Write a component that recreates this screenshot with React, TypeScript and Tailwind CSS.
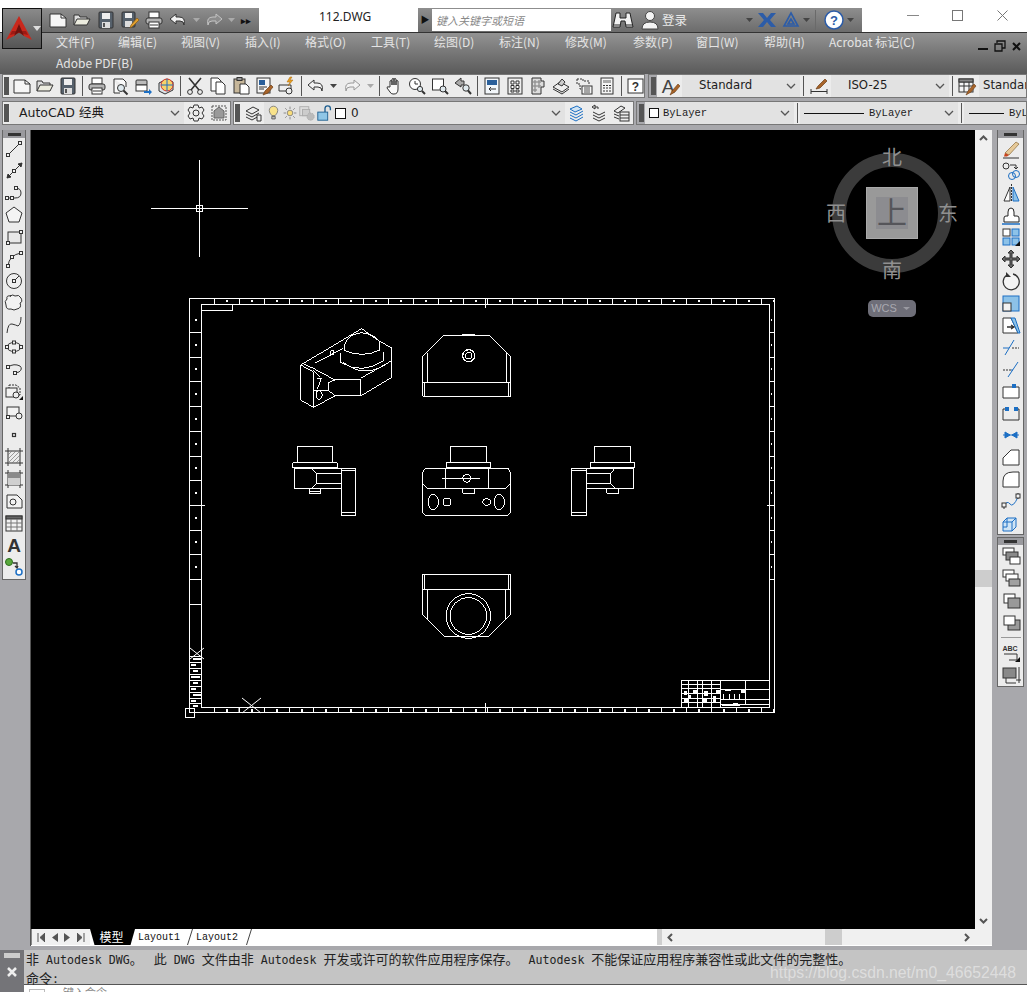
import React from "react";

const BL = "#1c6fc4";
const sq = (x: number, y: number, s = 3) => <rect x={x - s / 2} y={y - s / 2} width={s} height={s} fill="#f2f2f2" />;

const I: Record<string, React.ReactNode> = {
  new: <><path d="M2 4h11l5 4v9H2z" fill="#f6f6f6" /><path d="M13 4v4h5" /></>,
  open: <><path d="M2 15V5h5l1 2h7v2" fill="#ddd" /><path d="M2 15l3-6h13l-3 6z" fill="#ececdf" /></>,
  save: <><rect x="3" y="2" width="14" height="16" rx="1" fill="#56616c" /><rect x="6" y="3" width="8" height="6" fill="#eee" stroke="none" /><rect x="6" y="12" width="8" height="6" fill="#ddd" stroke="none" /><rect x="7" y="13" width="2" height="4" fill="#555" stroke="none" /></>,
  saveas: <><rect x="2" y="2" width="13" height="15" rx="1" fill="#56616c" /><rect x="5" y="3" width="7" height="5" fill="#eee" stroke="none" /><rect x="5" y="11" width="7" height="6" fill="#ddd" stroke="none" /><path d="M10 18l1-3 6-7 2 2-6 6z" fill="#e0a030" stroke="#8a5a10" strokeWidth="0.7" /></>,
  print: <><rect x="5" y="2" width="10" height="6" fill="#fff" /><rect x="2" y="8" width="16" height="6" rx="2" fill="#b5b5b5" /><rect x="5" y="12" width="10" height="6" fill="#fff" /><path d="M6 15h8" /></>,
  preview: <><path d="M4 3h9l3 3v5M4 3v14h6" fill="#fafafa" /><circle cx="11" cy="12" r="3.5" fill="#dfe9ee" /><path d="M13.5 14.5l4 4" strokeWidth="2" /></>,
  publish: <><rect x="3" y="4" width="11" height="5" rx="1" fill="#bbb" /><rect x="3" y="9" width="11" height="6" fill="#fff" /><path d="M11 15h5v-2l3 3-3 3v-2h-5z" fill={BL} stroke="none" /></>,
  d3: <><path d="M3 7l8-4 6 3v8l-8 4-6-3z" fill="#dbe4ea" /><circle cx="11" cy="9" r="6" fill="#f6d36a" stroke="#d0332a" /><path d="M11 3v12M5 9h12" stroke={BL} /></>,
  cut: <><path d="M4 2l10 12M16 2L6 14" strokeWidth="1.6" /><circle cx="5" cy="16" r="2.4" /><circle cx="15" cy="16" r="2.4" /></>,
  copy: <><path d="M3 2h7l3 3v10H3z" fill="#fff" /><path d="M8 6h6l3 3v9H8z" fill="#fff" /></>,
  paste: <><rect x="3" y="3" width="11" height="14" fill="#c7b79a" /><rect x="6" y="1.5" width="5" height="3" fill="#999" /><path d="M9 8h6l3 3v7H9z" fill="#fff" /></>,
  match: <><rect x="3" y="2" width="13" height="15" fill="#f5f5f5" /><rect x="5" y="4" width="6" height="5" fill="#2a5f9a" stroke="none" /><path d="M5 11h8M5 13h5" /><path d="M9 19l2-4 6-6 2 2-5 6z" fill="#a8642a" stroke="#6b3c14" strokeWidth="0.7" /></>,
  block: <><path d="M2 9h12v6H2z" fill="#eee" /><circle cx="12" cy="15" r="3" fill="#eee" /><path d="M13 1l-3 5h3l-2 4 5-6h-3l2-3z" fill="#e8a020" stroke="#a86a10" strokeWidth="0.5" /></>,
  undo: <path d="M8 4L2 9l6 5v-3h4q4 0 4 4 2-8-5-8H8z" fill="#f2f2f2" />,
  redo: <path d="M12 4l6 5-6 5v-3H8q-4 0-4 4-2-8 5-8h3z" fill="#f2f2f2" stroke="#999" />,
  qredo: <path d="M12 4l6 5-6 5v-3H8q-4 0-4 4-2-8 5-8h3z" fill="#8c8c8c" stroke="#c4c4c4" />,
  pan: <path d="M6 11V5q1-1 2 0v4V3q1-1 2 0v6V3q1-1 2 0v6V5q1-1 2 0v8q0 5-4 5H9q-2 0-3-2l-3-4q0-2 2-1z" fill="#fafafa" />,
  zr: <><circle cx="8" cy="8" r="5.5" fill="#fff" /><path d="M8 5v3h3" /><circle cx="13" cy="13" r="2.6" fill="#dfe9ee" /><path d="M15 15l3 3" strokeWidth="2" /></>,
  zw: <><rect x="2.5" y="3" width="11" height="11" fill="#fff" /><circle cx="13" cy="13" r="3" fill="#dfe9ee" /><path d="M15 15l3 3" strokeWidth="2" /></>,
  zp: <><path d="M8 2L2 7l6 4V9h3V5H8z" fill="#aaa" /><circle cx="13" cy="12" r="3.2" fill="#dfe9ee" /><path d="M15 14.5l3 3.5" strokeWidth="2" /></>,
  props: <><rect x="3" y="2" width="14" height="16" fill="#f2f6fa" /><rect x="5" y="4" width="10" height="5" fill="#2a5f9a" stroke="none" /><path d="M7 13h7M7 13l2-2M7 13l2 2" /></>,
  dc: <><rect x="3" y="2" width="14" height="16" fill="#eee" /><path d="M6 5h3v3H6zM11 5h3v3h-3zM6 9.500h3v3H6zM11 9.500h3v3h-3zM6 14h3v2H6zM11 14h3v2h-3z" fill="#fff" /></>,
  pal: <><path d="M4 2h9v3h3v6h-3v7H4z" fill="#ddd" /><path d="M6 5h2v2H6zM10 5h2v2h-2zM6 9h2v2H6zM10 9h2v2h-2zM6 13h2v2H6z" fill="#fff" stroke="#777" /></>,
  sheet: <><path d="M2 11l7-5 9 5-7 5z" fill="#eee" /><path d="M2 13l9 5 7-5" /><path d="M7 8l4-5 3 3-3 4z" fill="#ccc" /></>,
  markup: <><path d="M3 3h6v2h6v4M3 3v5h3v5h3" strokeDasharray="2 1" /><rect x="8" y="10" width="10" height="8" fill="#f5f5f5" /><path d="M10 12h6M10 14h6M10 16h6" stroke="#555" /></>,
  calc: <><rect x="4" y="2" width="12" height="16" fill="#f5f5f5" /><rect x="6" y="4" width="8" height="3" fill="#aaa" stroke="none" /><path d="M6 9.500h2M9 9.500h2M12 9.500h2M6 12h2M9 12h2M12 12h2M6 15h2M9 15h2M12 15h2" /></>,
  help: <><rect x="2" y="3" width="15" height="14" fill="#fff" /><text x="9.500" y="15" fontSize="12" fontWeight="700" textAnchor="middle" fill="#333" stroke="none" fontFamily="Liberation Sans">?</text></>,
  a: <><text x="8" y="17" fontSize="19" textAnchor="middle" fill="#444" stroke="none" fontFamily="Liberation Sans">A</text><path d="M10 19l2-4 6-7 2 2-5 6z" fill="#a8642a" stroke="#6b3c14" strokeWidth="0.6" /></>,
  dim: <><path d="M2 13v5M18 13v5M2 15.500h16" /><path d="M7 13l2-3 7-7 2 2-7 7z" fill="#a8642a" stroke="#6b3c14" strokeWidth="0.7" /></>,
  table: <><rect x="2" y="3" width="14" height="13" fill="#f5f5f5" /><path d="M2 6h14M2 10h14M7 6v10M12 6v10" /><rect x="2" y="3" width="14" height="3" fill="#888" /><path d="M9 19l2-4 6-7 2 2-5 6z" fill="#a8642a" stroke="#6b3c14" strokeWidth="0.6" /></>,
  gear: <><circle cx="10" cy="10" r="3" /><path d="M8 2h4l1 3 3-1 2 3-2 3 2 3-2 3-3-1-1 3H8l-1-3-3 1-2-3 2-3-2-3 2-3 3 1z" /></>,
  wsp: <><path d="M3 3h14v14H3z" strokeDasharray="2 1" stroke="#555" /><path d="M5 15V8l5-4 5 4v7z" fill="#9a9a9a" stroke="#666" /></>,
  lay: <><path d="M3 8l7-4 6 3-7 4z" fill="#eee" /><path d="M3 11l6 3 7-4M3 14l6 3 7-4" /><path d="M14 12h4v6h-4z" fill="#eee" /></>,
  bulb: <><path d="M5 7a5 5 0 1 1 10 0q0 3-3 6H8q-3-3-3-6z" fill="#f8e28a" stroke="#777" /><path d="M8 14h4v3H8z" fill="#bbb" stroke="#555" /></>,
  sun: <><circle cx="10" cy="10" r="3.5" fill="#f8dc7a" stroke="#777" /><path d="M10 2v3M10 15v3M2 10h3M15 10h3M4 4l2 2M14 14l2 2M16 4l-2 2M6 14l-2 2" stroke="#777" /></>,
  frz: <><rect x="2" y="3" width="10" height="10" fill="#ddd" stroke="#aaa" /><rect x="5" y="6" width="8" height="7" fill="#ccc" stroke="#aaa" /><circle cx="14" cy="14" r="4" fill="#bbb" stroke="#aaa" strokeDasharray="1.500 1" /></>,
  lock: <><rect x="2" y="9" width="11" height="9" fill="#8fc6e6" stroke="#1d5e90" /><path d="M10 9V5q0-3 3-3t3 3v2" stroke="#1d5e90" strokeWidth="1.500" /></>,
  mk: <><path d="M3 6l7-3 5 3-7 3z" fill="#cfe3f3" stroke={BL} /><path d="M3 9l6 3 7-4M3 12l6 3 7-4M3 15l6 3 7-4" stroke={BL} /></>,
  prev: <><path d="M4 4l3-2v4zM7 4h3v2" /><path d="M5 9l6 3 6-3M5 12l6 3 6-3M5 15l6 3 6-3" /></>,
  st: <><path d="M3 8l7-5 4 2-7 5zM3 11l5 2M3 14l5 2" /><rect x="9" y="9" width="9" height="9" fill="#eee" /><path d="M9 12h9M9 15h9" /></>,
  line: <><path d="M4 16L16 4" />{sq(4, 16)}{sq(16, 4)}</>,
  xline: <><path d="M3 17L18 2M10 10" /><path d="M3 17l4-1-3-3zM18 2l-4 1 3 3z" fill="#333" />{sq(10, 10)}</>,
  pline: <><path d="M3 15h8q6 0 6-5t-6-5" />{sq(3, 15)}{sq(8, 15)}{sq(12, 5)}</>,
  poly: <path d="M10 2l8 6-3 9H5L2 8z" fill="#f4f4f4" />,
  rect: <><rect x="4" y="5" width="13" height="11" fill="#e8e8e8" />{sq(4, 16)}{sq(17, 5)}</>,
  arc: <><path d="M4 17Q5 6 17 4" />{sq(4, 17)}{sq(8, 8)}{sq(17, 4)}</>,
  circ: <><circle cx="10" cy="10" r="7.500" fill="#efefef" /><path d="M10 10l5-5" />{sq(10, 10)}</>,
  cloud: <path d="M6 3q3-2 5 0 4-2 6 2 2 4-1 5 2 5-3 6-3 2-6 0-5 1-5-4-2-4 1-6-1-4 4-3z" fill="#f2f2f2" />,
  spl: <path d="M3 18Q4 8 8 9t6 2q3-2 3-9" />,
  ell: <><ellipse cx="10" cy="10" rx="7" ry="4.500" fill="#efefef" />{sq(3, 10)}{sq(17, 10)}{sq(10, 5.500)}{sq(10, 14.500)}</>,
  earc: <><path d="M4 8q6-4 12-1 3 3-1 6l-4 1" />{sq(4, 8)}{sq(11, 14)}</>,
  ins: <><path d="M5 4h7l4 3v7H5z" strokeDasharray="2 1" /><rect x="2" y="7" width="11" height="9" fill="#f2f2f2" /><circle cx="12" cy="14" r="3" fill="#eee" /><path d="M19 15v4h-4z" fill="#111" stroke="none" /></>,
  blk: <><rect x="3" y="4" width="12" height="9" fill="#f2f2f2" /><circle cx="15" cy="13" r="3" fill="#eee" />{sq(4, 14)}</>,
  pt: <rect x="8.500" y="8.500" width="3" height="3" strokeWidth="1.200" />,
  hatch: <><path d="M1 4h18M1 16h18M4 1v18M16 1v18" /><path d="M4 8l4-4M4 12l8-8M4 16L16 4M8 16l8-8M12 16l4-4" stroke="#777" strokeWidth="0.700" /></>,
  grad: <><path d="M1 4h18M1 16h18M4 1v18M16 1v18" /><rect x="4" y="4" width="12" height="12" fill="#8a8a8a" stroke="none" /><rect x="4" y="9" width="12" height="7" fill="#cfcfcf" stroke="none" /></>,
  region: <><path d="M3 4h10l5 5v8H3z" fill="#f2f2f2" /><circle cx="9" cy="11" r="3" /></>,
  tbl: <><rect x="2" y="3" width="16" height="15" fill="#f2f2f2" /><rect x="2" y="3" width="16" height="3" fill="#666" /><path d="M2 10h16M2 14h16M7 6v12M13 6v12" stroke="#777" /></>,
  txt: <text x="10" y="17" fontSize="19" textAnchor="middle" fill="#333" stroke="none" fontFamily="Liberation Sans" fontWeight="700">A</text>,
  addsel: <><circle cx="5" cy="5" r="3.500" fill="#58a83c" stroke="#2d6e1c" /><circle cx="15" cy="15" r="3" fill="#fff" stroke={BL} strokeWidth="1.500" /><path d="M9 6h4v4M11 9l2 2 1-2" strokeWidth="1.300" /></>,
  erase: <><path d="M4 14L15 3l3 2L8 16z" fill="#e6c998" stroke="#8a6a3a" strokeWidth="0.700" /><path d="M4 14l4 2-2 1.500H3z" fill="#c8431a" stroke="none" /><path d="M2 19h16" /></>,
  rcopy: <><circle cx="5" cy="5" r="3" /><path d="M9 4h6v4M13 6l2 2 2-2" /><circle cx="11" cy="15" r="3.500" stroke={BL} /><circle cx="15" cy="13" r="3.500" stroke={BL} /></>,
  mir: <><path d="M9 4v14H3z" fill="#fff" /><path d="M12 4v14h6z" fill="#8dc2e8" stroke={BL} /><path d="M10.500 1v18" strokeDasharray="2 1" /></>,
  off: <><path d="M3 17v-4q0-2 2-2h2V7q0-4 3-4t3 4v4h3q2 0 2 2v4z" fill="#fff" stroke="#222" /><path d="M1 19h18" stroke={BL} strokeWidth="1.500" /></>,
  arr: <><rect x="2" y="2" width="7" height="7" fill="#fff" /><rect x="11" y="2" width="7" height="7" fill="#8dc2e8" stroke={BL} /><rect x="2" y="11" width="7" height="7" fill="#8dc2e8" stroke={BL} /><rect x="11" y="11" width="7" height="7" fill="#8dc2e8" stroke={BL} /><path d="M19 14v5h-5z" fill="#111" stroke="none" /></>,
  mov: <path d="M10 1l3 3h-2v5h5V7l3 3-3 3v-2h-5v5h2l-3 3-3-3h2v-5H4v2l-3-3 3-3v2h5V4H7z" fill="#666" />,
  rot: <><path d="M6 4a8 8 0 1 0 6-1" strokeWidth="1.300" fill="#f4f4f4" /><path d="M5 1v5h5z" fill="#333" stroke="none" /></>,
  sca: <><rect x="2" y="3" width="16" height="15" fill="#8dc2e8" stroke={BL} /><rect x="2" y="10" width="8" height="8" fill="#f2f2f2" stroke="#333" /></>,
  str: <><path d="M2 3h8l7 15H2z" fill="#fff" /><path d="M10 3h4l5 15h-2z" fill="#8dc2e8" stroke={BL} /><path d="M6 12h7M10 10l3 2-3 2" strokeWidth="1.300" /></>,
  trim: <><path d="M4 18L13 3" stroke={BL} /><path d="M2 11h6" stroke={BL} /><path d="M11 11h7" stroke="#333" strokeDasharray="2 1" /></>,
  ext: <><path d="M7 18L17 3" stroke={BL} /><path d="M2 11h8" stroke="#333" strokeDasharray="2 1" /><path d="M10 11h2" stroke={BL} /></>,
  brp: <><path d="M2 6h16M2 6v11h16V6" fill="#fff" /><rect x="11" y="3" width="4" height="4" fill={BL} stroke="none" /></>,
  brk: <><path d="M2 6v11h16V6" /><path d="M2 6h2M17 6h1" /><rect x="4" y="4" width="4" height="4" fill={BL} stroke="none" /><rect x="13" y="4" width="4" height="4" fill={BL} stroke="none" /></>,
  join: <><path d="M2 10h16" stroke={BL} /><path d="M4 7l5 3-5 3zM16 7l-5 3 5 3z" fill={BL} stroke={BL} /></>,
  cham: <path d="M2 18v-7l8-8h8v15z" fill="#fff" stroke="#333" />,
  fil: <path d="M2 18v-6Q2 3 12 3h6v15z" fill="#fff" stroke="#333" />,
  blend: <><path d="M3 15q3-6 6-2t8-7" stroke={BL} /><path d="M3 18v-6M17 8V2" />{sq(3, 14, 4)}{sq(17, 5, 4)}</>,
  expl: <><path d="M2 9l4-4h9v9l-4 4H2z" fill="#cfe4f5" stroke={BL} /><path d="M2 9h9v9M11 9l4-4M6 5v9H2" stroke={BL} /></>,
  ord1: <><rect x="2" y="2" width="11" height="7" fill="#fff" /><rect x="5" y="6" width="12" height="8" fill="#8a8a8a" /><rect x="9" y="11" width="10" height="7" fill="#fff" /></>,
  ord2: <><rect x="2" y="2" width="11" height="7" fill="#fff" /><rect x="5" y="6" width="12" height="7" fill="#fff" /><rect x="8" y="11" width="11" height="7" fill="#a0a0a0" /></>,
  ord3: <><rect x="3" y="4" width="11" height="9" fill="#fff" /><rect x="7" y="8" width="12" height="10" fill="#999" /></>,
  ord4: <><rect x="7" y="8" width="12" height="10" fill="#999" /><rect x="3" y="4" width="11" height="9" fill="#fff" /></>,
  abc: <><text x="9" y="8" fontSize="7" fontWeight="700" textAnchor="middle" fill="#333" stroke="none" fontFamily="Liberation Sans">ABC</text><path d="M3 11h13v6H8" /><path d="M19 14v5h-5z" fill="#111" stroke="none" /></>,
  hat: <><rect x="2" y="3" width="13" height="10" fill="#888" /><path d="M5 13v5h10M18 2v16M15 15h6" /></>,
};

function Ic({ n, w = 23 }: { n: string; w?: number }) {
  return (
    <span className="flex h-[20px] shrink-0 items-center justify-center" style={{ width: w }}>
      <svg width="20" height="20" viewBox="0 0 20 20" fill="none" stroke="#333" strokeWidth="1">
        {I[n]}
      </svg>
    </span>
  );
}
const Sep = () => (
  <span className="flex h-[20px] w-[6px] shrink-0 justify-center">
    <span className="h-full w-[1px] bg-[#555]" />
  </span>
);
const Drop = ({ pale }: { pale?: boolean }) => (
  <span className="flex h-[20px] w-[12px] shrink-0 items-center justify-center">
    <svg width="7" height="4" viewBox="0 0 7 4"><path d="M0 0h7L3.500 4z" fill={pale ? "#aaa" : "#444"} /></svg>
  </span>
);
const Grip = ({ cls = "" }: { cls?: string }) => (
  <span className={`h-[18px] w-[5px] shrink-0 bg-[radial-gradient(#555_1px,transparent_1px)] bg-[length:2px_2px] ${cls}`} />
);
const Chev = () => (
  <svg className="shrink-0" width="10" height="6" viewBox="0 0 10 6" fill="none" stroke="#555" strokeWidth="1.300"><path d="M1 1l4 4 4-4" /></svg>
);
function Combo({ w, children, cls = "" }: { w: number; children: React.ReactNode; cls?: string }) {
  return (
    <div className={`flex h-[22px] shrink-0 items-center justify-between bg-[#e2e2e2] pr-[4px] text-[#1c1c1c] ${cls}`} style={{ width: w }}>
      <div className="flex min-w-0 flex-1 items-center overflow-hidden whitespace-nowrap">{children}</div>
      <Chev />
    </div>
  );
}

const MENU: [string, number][] = [["文件(F)", 62], ["编辑(E)", 63], ["视图(V)", 64], ["插入(I)", 60], ["格式(O)", 66], ["工具(T)", 63], ["绘图(D)", 65], ["标注(N)", 66], ["修改(M)", 68], ["参数(P)", 63], ["窗口(W)", 68], ["帮助(H)", 65], ["Acrobat 标记(C)", 100], ["Adobe PDF(B)", 100]];
const LEFT = ["line", "xline", "pline", "poly", "rect", "arc", "circ", "cloud", "spl", "ell", "earc", "ins", "blk", "pt", "hatch", "grad", "region", "tbl", "txt", "addsel"];
const RIGHT = ["erase", "rcopy", "mir", "off", "arr", "mov", "rot", "sca", "str", "trim", "ext", "brp", "brk", "join", "cham", "fil", "blend", "expl"];

const SANS = "font-['Noto_Sans_CJK_SC','Noto_Sans',sans-serif]";
const DJ = "font-['DejaVu_Sans','Noto_Sans_CJK_SC',sans-serif]";
const MONO = "font-['Liberation_Mono','Noto_Sans_CJK_SC',monospace]";

function Mixed({ text }: { text: string }) {
  return (
    <>
      {text.split(/([\u3000-\u9fff]+)/).map((p, i) =>
        /[\u3000-\u9fff]/.test(p) ? (
          <span key={i} className="text-[13px] font-['Noto_Sans_CJK_SC',sans-serif]">{p}</span>
        ) : (
          <span key={i} className="whitespace-pre font-['DejaVu_Sans_Mono',monospace] text-[11.600px]">{p}</span>
        ),
      )}
    </>
  );
}

const Slash = () => (
  <svg className="shrink-0" width="6" height="16" viewBox="0 0 6 16" fill="none" stroke="#444"><path d="M5.500 0L.5 16" /></svg>
);

function Drawing() {
  const xs = Array.from({ length: 23 }, (_, i) => 214 + i * 24.85);
  const ys = Array.from({ length: 15 }, (_, i) => 579 - i * 24.7).filter((y) => y - 13 > 305);
  const noise = [656, 662, 668, 674, 680, 686, 692, 698, 703];
  return (
    <svg className="absolute inset-0" width="944" height="799" viewBox="31 130 944 799" fill="none" stroke="#fff" strokeWidth="1" shapeRendering="crispEdges">
      {/* crosshair */}
      <path d="M151 208.500H248M199.500 160V257" />
      <rect x="196.500" y="205.500" width="6" height="6" />
      {/* frame */}
      <rect x="189.500" y="298.500" width="585" height="414" />
      <rect x="201.500" y="304.500" width="568" height="403" />
      <path d="M202 310.500H232V304" />
      <rect x="185.500" y="708.500" width="9" height="9" />
      <path d="M239 707.500v5M242 698l19 15M261 698l-19 15M190 648l14 11M204 648l-14 11" shapeRendering="auto" />
      <path d="M485.500 703V713M485.500 298V308M190 505.500H205M767 505.500H775" />
      {xs.map((x) => (
        <g key={x}>
          <path d={`M${Math.round(x) + 0.5} 707V712M${Math.round(x) + 0.5} 299V304`} />
          <rect x={Math.round(x) + 12} y="709" width="2" height="3" fill="#fff" stroke="none" />
          <rect x={Math.round(x) + 12} y="300" width="2" height="2" fill="#fff" stroke="none" />
        </g>
      ))}
      {ys.map((y) => (
        <g key={y}>
          <path d={`M190 ${Math.round(y) + 0.5}H201M769 ${Math.round(y) + 0.5}H774`} />
          <rect x="195" y={Math.round(y) - 13} width="2" height="2" fill="#fff" stroke="none" />
          <rect x="771" y={Math.round(y) - 13} width="1" height="2" fill="#fff" stroke="none" />
        </g>
      ))}
      <path d="M190 604.500H201" />
      {/* dense corner on left */}
      {noise.map((y, i) => (
        <g key={y}>
          <path d={`M190 ${y + 0.5}H201`} />
          <rect x={i % 2 ? 191 : 193} y={y + 2} width={i % 3 === 0 ? 9 : 5} height="2" fill="#fff" stroke="none" />
        </g>
      ))}
      {/* views traced from the drawing */}
      <g transform="translate(280 320) scale(.33333)" strokeWidth="3" shapeRendering="crispEdges">
        <path d="M62 135L205 50L245 26L300 65L335 83V172L242 228H165L100 262L62 240ZM62 135L100 155V262M66 130L100 145L165 180H242V228M242 175L335 122M147 187V212L165 228M147 187L165 180M100 212L147 212M100 150L120 170" />
        <path d="M195 72V92Q247 115 300 90V68M195 72Q200 45 245 38Q290 45 300 68M183 100V128Q247 165 312 122V95M188 125Q247 175 316 135M104 130L190 85" />
        <path d="M110 175H124L112 208M108 222Q108 212 116 212Q128 214 126 230Q122 240 114 238Q106 234 108 222ZM152 92H162V104H152Z" />
        <path d="M428 110L492 46H627L692 110V229H428ZM428 187H692M435 187V229M685 187V229M443 187V98M680 187V98M545 44H585" />
        <circle cx="566" cy="107" r="18" strokeWidth="4" />
        <circle cx="566" cy="107" r="10" />
        <path d="M52 429V379H158V429M38 429H172V443H38ZM43 443V506H184M43 445H227V586H184V445M184 453H227M184 578H227M95 445L110 460H184M95 506L110 490H184M110 460V490M88 506V520H122V506M88 515H122" />
        <path d="M511 429V379H620V429M499 429H632V443H499ZM428 458L436 445H684L692 458V578L684 586H436L428 578ZM428 492L443 506H677L692 490M497 445V506M625 445V506M487 475H600M548 506V520H584V506" />
        <circle cx="560" cy="475" r="12" />
        <ellipse cx="460" cy="546" rx="15" ry="23" />
        <rect x="490" y="535" width="22" height="21" rx="5" />
        <ellipse cx="620" cy="546" rx="12" ry="10" />
        <ellipse cx="658" cy="546" rx="15" ry="23" />
        <path d="M943 429V379H1052V429M931 429H1064V443H931ZM1061 443V506H920M1061 445H874V586H920V445M874 453H920M874 578H920M1005 445L992 460H920M1005 506L992 490H920M992 460V490M980 506V520H1016V506" />
      </g>
      <g transform="translate(180 560) scale(.33333)" strokeWidth="3">
        <path d="M727 45H992V89H727ZM734 45V89M985 45V89M727 89V163L793 229H927L992 163V89M742 89V178M978 89V178" />
        <circle cx="865" cy="168" r="67" />
        <circle cx="865" cy="168" r="55" />
      </g>
      {/* title block */}
      <g transform="translate(660 670) scale(.33333)" strokeWidth="3">
        <path d="M64 31H328V112H64ZM182 31V112M64 44H182M64 57H182M64 72H182M64 85H182M64 98H182M85 31V112M113 31V112M128 31V112M155 31V112M182 58H328M182 88H328M182 103H328M256 31V103" />
        <path d="M192 72V88M208 72V88M224 72V88M240 72V88" />
      </g>
      <g fill="#fff" stroke="none">
        <rect x="684" y="691" width="3" height="4" /><rect x="693" y="690" width="5" height="3" /><rect x="704" y="691" width="4" height="5" /><rect x="713" y="696" width="3" height="7" /><rect x="725" y="689" width="6" height="2" /><rect x="684" y="699" width="4" height="3" /><rect x="741" y="690" width="4" height="3" /><rect x="722" y="705" width="18" height="1" />
        <rect x="703" y="698" width="4" height="5" /><rect x="716" y="690" width="4" height="3" /><rect x="688" y="695" width="3" height="3" /><rect x="733" y="703" width="5" height="3" />
      </g>
      {/* view compass */}
      <g shapeRendering="auto" stroke="none">
        <circle cx="892" cy="213" r="53" stroke="#3b3b3b" strokeWidth="14" />
        <rect x="866.500" y="187.500" width="51" height="51" fill="#999" stroke="#aaa" />
        <rect x="876" y="197" width="32" height="32" fill="#8c8c90" />
        <text x="892" y="223" fontSize="30" textAnchor="middle" fill="#55555a" fontFamily="Noto Sans CJK SC">上</text>
        <g fill="#909090" fontSize="20" textAnchor="middle" fontFamily="Noto Sans CJK SC">
          <text x="892" y="165">北</text>
          <text x="892" y="278">南</text>
          <text x="836" y="221">西</text>
          <text x="948" y="221">东</text>
        </g>
        <rect x="868" y="300" width="48" height="17" rx="5" fill="#6e6e78" />
        <text x="884" y="312" fontSize="11" textAnchor="middle" fill="#a9a9b0" fontFamily="Liberation Sans">WCS</text>
        <path d="M903 307h7l-3.500 3z" fill="#9a9aa2" />
      </g>
    </svg>
  );
}

export default function App() {
  return (
    <div className={`relative flex h-[992px] w-[1027px] flex-col overflow-hidden bg-[#a8a8ac] ${SANS}`}>
      {/* Application button */}
      <div className="absolute left-[2px] top-[8px] z-10 flex h-[41px] w-[40px] items-center border border-[#111] bg-gradient-to-b from-[#8a8a8a] to-[#555]">
        <svg className="ml-[3px]" width="26" height="25" viewBox="0 0 26 25">
          <path d="M13 0L0 24l8-4 5-4 5 4 8 4z" fill="#c9281c" />
          <path d="M6 15h14l2 4-9-2-9 2z" fill="#9c1a14" />
          <path d="M13 8L8 20l5-4 5 4z" fill="#6e120e" />
        </svg>
        <svg className="ml-[1px]" width="8" height="5" viewBox="0 0 8 5"><path d="M0 0h8L4 5z" fill="#ddd" /></svg>
      </div>

      {/* Title row */}
      <div className="flex h-[32px] shrink-0 bg-white pt-[8px]">
        <div className="w-[42px] shrink-0" />
        <div className="flex w-[217px] shrink-0 items-center bg-gradient-to-b from-[#8e8e8e] to-[#6c6c6c] pl-[4px]">
          <Ic n="new" w={24} /><Ic n="open" w={24} /><Ic n="save" w={24} /><Ic n="saveas" w={24} /><Ic n="print" w={24} /><Ic n="undo" w={24} /><Drop pale /><Ic n="qredo" /><Drop pale />
          <span className="ml-[4px] text-[9px] font-bold leading-none text-[#111]">▸▸</span>
        </div>
        <div className="flex w-[159px] shrink-0 items-start justify-start pl-[60px] text-[12px] text-[#222] font-['Noto_Sans',sans-serif]">112.DWG</div>
        <div className="flex w-[444px] shrink-0 items-center bg-gradient-to-b from-[#8e8e8e] to-[#6c6c6c]">
          <span className="flex w-[14px] justify-center text-[9px] text-[#111]">▶</span>
          <div className="flex h-[22px] w-[179px] items-center bg-white pl-[4px] text-[11px] italic text-[#888]">键入关键字或短语</div>
          <svg className="ml-[1px] mr-[2px]" width="22" height="20" viewBox="0 0 22 20" fill="#f2f2f2" stroke="#222" strokeWidth="1"><path d="M4 3h4v5h6V3h4l1 5 2 9h-7l-1-6H9l-1 6H1l2-9z" /><path d="M2 15h6M14 15h6" /></svg>
          <svg className="ml-[3px]" width="22" height="22" viewBox="0 0 22 22" fill="#f4f4f4" stroke="#444"><circle cx="11" cy="7" r="4.500" /><path d="M3 20q0-7 8-7t8 7z" /></svg>
          <span className="ml-[1px] w-[81px] text-[12.500px] leading-none text-[#e9e9e9]">登录</span>
          <Drop />
          <svg className="ml-[2px]" width="20" height="16" viewBox="0 0 20 16" fill="#2c5ca8"><path d="M1 1h5l4 5 4-5h5l-6 7 6 7h-5l-4-5-4 5H1l6-7z" /></svg>
          <svg className="ml-[5px]" width="18" height="18" viewBox="0 0 18 18" fill="none" stroke="#2c5ca8" strokeWidth="1.600"><path d="M9 2l7 13H2zM9 8l-3 5h6z" /></svg>
          <Drop />
          <span className="ml-[3px] h-[20px] w-[1px] bg-[#6a6a6a]" />
          <svg className="ml-[8px]" width="20" height="20" viewBox="0 0 20 20"><circle cx="10" cy="10" r="9" fill="#fff" stroke="#2c5ca8" strokeWidth="1.500" /><text x="10" y="15" fontSize="13" fontWeight="700" textAnchor="middle" fill="#2c5ca8" fontFamily="Liberation Sans">?</text></svg>
          <Drop />
        </div>
        <div className="flex flex-1 items-start pt-[2px]">
          <svg className="ml-[45px] mt-[5px]" width="12" height="2"><rect width="12" height="1" fill="#888" /></svg>
          <svg className="ml-[33px]" width="11" height="11" fill="none" stroke="#777"><rect x=".5" y=".5" width="10" height="10" /></svg>
          <svg className="ml-[34px]" width="11" height="11" fill="none" stroke="#777"><path d="M.5.5l10 10M10.500.5l-10 10" /></svg>
        </div>
      </div>

      {/* Menu */}
      <div className="relative h-[42px] shrink-0 border-t border-[#333] bg-gradient-to-b from-[#939393] to-[#5a5a5a] pl-[56px] pr-[80px]">
        <div className="flex flex-wrap -translate-y-[1px] text-[12px] leading-[20.500px] text-[#e4e4e4]">
          {MENU.map(([m, w]) => (
            <span key={m} className="whitespace-nowrap" style={{ width: w }}>{m}</span>
          ))}
        </div>
        <div className="absolute right-[6px] top-[7px] flex items-center gap-[6px]">
          <svg width="10" height="10"><rect y="7" width="10" height="2" fill="#111" /></svg>
          <svg width="12" height="12" fill="none" stroke="#111" strokeWidth="1.300"><path d="M3 3V1h8v7H8M1 4h7v7H1z" /></svg>
          <svg width="9" height="9" stroke="#111" strokeWidth="2"><path d="M1 1l7 7M8 1L1 8" /></svg>
        </div>
      </div>

      {/* Toolbars row 1 */}
      <div className={`flex h-[24px] shrink-0 text-[12px] ${DJ}`}>
        <div className="ml-[2px] flex w-[643px] shrink-0 items-center overflow-hidden border border-[#777] bg-[#ececec] pl-[1px]">
          <Grip cls="mr-[1px]" />
          <Ic n="new" /><Ic n="open" /><Ic n="save" /><Sep />
          <Ic n="print" /><Ic n="preview" /><Ic n="publish" /><Ic n="d3" /><Sep />
          <Ic n="cut" /><Ic n="copy" /><Ic n="paste" /><Ic n="match" /><Ic n="block" /><Sep />
          <Ic n="undo" /><Drop /><Ic n="redo" w={25} /><Drop pale /><Sep />
          <Ic n="pan" /><Ic n="zr" /><Ic n="zw" /><Ic n="zp" /><Sep />
          <Ic n="props" /><Ic n="dc" /><Ic n="pal" /><Ic n="sheet" /><Ic n="markup" /><Ic n="calc" /><Sep />
          <Ic n="help" />
        </div>
        <div className="ml-[3px] flex flex-1 items-center overflow-hidden border border-[#777] bg-[#ececec] text-[11.700px]">
          <span className="flex h-full w-[8px] shrink-0 items-center justify-center bg-[#a8a8ac]"><Grip /></span>
          <Ic n="a" w={25} />
          <Combo w={118}><span className="pl-[17px]">Standard</span></Combo>
          <Sep />
          <Ic n="dim" w={25} />
          <Combo w={118}><span className="pl-[17px]">ISO-25</span></Combo>
          <Sep />
          <Ic n="table" w={24} />
          <Combo w={80}><span className="pl-[4px]">Standard</span></Combo>
        </div>
      </div>

      {/* Toolbars row 2 */}
      <div className={`mt-[3px] flex h-[24px] shrink-0 text-[12px] ${DJ}`}>
        <div className="ml-[2px] flex w-[229px] shrink-0 items-center border border-[#777] bg-[#ececec] pl-[1px]">
          <Grip cls="mr-[1px]" />
          <Combo w={174}><span className="pl-[9px] text-[12.500px]">AutoCAD 经典</span></Combo>
          <Ic n="gear" /><Ic n="wsp" />
        </div>
        <div className="ml-[2px] flex w-[401px] shrink-0 items-center overflow-hidden border border-[#777] bg-[#ececec] pl-[1px]">
          <Grip cls="mr-[2px]" />
          <Ic n="lay" w={22} />
          <Combo w={301} cls="bg-[#dedede]">
            <span className="flex items-center pl-[1px]">
              <Ic n="bulb" w={17} /><Ic n="sun" w={16} /><Ic n="frz" w={18} /><Ic n="lock" w={18} />
              <span className="ml-[1px] h-[11px] w-[11px] border border-[#111] bg-white" />
              <span className="ml-[5px] text-[12px]">0</span>
            </span>
          </Combo>
          <Ic n="mk" /><Ic n="prev" w={20} /><span className="ml-[1px]"><Ic n="st" w={24} /></span>
        </div>
        <div className={`ml-[2px] flex flex-1 items-center overflow-hidden border border-[#777] bg-[#ececec] ${MONO}`}>
          <span className="flex h-full w-[8px] shrink-0 items-center justify-center bg-[#a8a8ac]"><Grip /></span>
          <Combo w={149}>
            <span className="ml-[4px] mr-[4px] h-[10px] w-[10px] border border-[#111] bg-white" />
            <span className="pt-[1px] text-[10.500px]">ByLayer</span>
          </Combo>
          <Sep />
          <Combo w={158}>
            <span className="ml-[4px] mr-[5px] h-[1px] w-[60px] bg-[#111]" />
            <span className="pt-[1px] text-[10.500px]">ByLayer</span>
          </Combo>
          <Sep />
          <Combo w={90}>
            <span className="ml-[5px] mr-[5px] h-[1px] w-[35px] shrink-0 bg-[#111]" />
            <span className="pt-[1px] text-[10.500px]">ByLayer</span>
          </Combo>
        </div>
      </div>

      {/* Workspace */}
      <div className="mt-[5px] flex h-[816px] shrink-0">
        {/* left dock */}
        <div className="w-[31px] shrink-0 border-r border-[#555] pl-[2px]">
          <div className="flex w-[24px] flex-col items-center border border-t-0 border-[#666] bg-[#ececec] pb-[1px]">
            <span className="flex h-[8px] w-full items-center justify-center bg-[#9a9a9e]"><span className="h-[3px] w-[13px] bg-[radial-gradient(#333_1px,transparent_1px)] bg-[length:2px_2px]" /></span>
            {LEFT.map((n) => (
              <span key={n} className="flex h-[22px] items-center"><Ic n={n} w={22} /></span>
            ))}
          </div>
        </div>

        {/* centre */}
        <div className="flex w-[961px] shrink-0 flex-col">
          <div className="flex h-[799px] shrink-0">
            <div className="relative w-[944px] shrink-0 bg-black">
              <Drawing />
            </div>
            <div className="relative flex w-[17px] shrink-0 flex-col items-center justify-between bg-[#f0f0f0] py-[5px]">
              <svg width="9" height="6" viewBox="0 0 9 6" fill="none" stroke="#555" strokeWidth="2"><path d="M1 5l3.500-3.500L8 5" /></svg>
              <svg width="9" height="6" viewBox="0 0 9 6" fill="none" stroke="#555" strokeWidth="2"><path d="M1 1l3.500 3.500L8 1" /></svg>
              <div className="absolute left-0 top-[440px] h-[17px] w-[17px] bg-[#cdcdcd]" />
            </div>
          </div>
          {/* tab strip */}
          <div className={`flex h-[16px] shrink-0 items-stretch bg-white ${MONO}`}>
            <div className="flex w-[59px] shrink-0 items-center justify-around border-l border-[#888] bg-[#f0f0f0] px-[2px] text-[#555]">
              <svg width="8" height="9"><path d="M1 0v9M8 0L3 4.500 8 9z" fill="#555" stroke="#555" /></svg>
              <svg width="7" height="9"><path d="M7 0L1 4.500 7 9z" fill="#555" /></svg>
              <svg width="7" height="9"><path d="M0 0l6 4.500L0 9z" fill="#555" /></svg>
              <svg width="8" height="9"><path d="M7 0v9M0 0l5 4.500L0 9z" fill="#555" stroke="#555" /></svg>
            </div>
            <div className="flex h-full w-[45px] shrink-0 items-center justify-center bg-black pr-[2px] text-[12px] text-white font-['Noto_Sans_CJK_SC',sans-serif] [clip-path:polygon(0_0,100%_0,90%_100%,10%_100%)]">模型</div>
            <div className="ml-[3px] flex w-[49px] shrink-0 items-center pt-[1px] text-[10px] text-[#111]">Layout1</div>
            <Slash />
            <div className="ml-[3px] flex w-[50px] shrink-0 items-center pt-[1px] text-[10px] text-[#111]">Layout2</div>
            <Slash />
            <div className="w-[405px] shrink-0" />
            <div className="relative flex flex-1 items-center justify-between bg-[#f0f0f0] pl-[10px] pr-[22px]">
              <div className="absolute left-0 top-0 h-full w-[5px] bg-[#cfcfcf]" />
              <svg width="6" height="9" viewBox="0 0 6 9" fill="none" stroke="#555" strokeWidth="2"><path d="M5 1L1.500 4.500 5 8" /></svg>
              <div className="absolute left-[168px] top-0 h-full w-[17px] bg-[#cdcdcd]" />
              <svg width="6" height="9" viewBox="0 0 6 9" fill="none" stroke="#555" strokeWidth="2"><path d="M1 1l3.500 3.500L1 8" /></svg>
            </div>
          </div>
          <div className="h-[1px] shrink-0 bg-white" />
        </div>

        {/* right dock */}
        <div className="flex w-[35px] shrink-0 flex-col pl-[5px] pr-[3px]">
          <div className="flex flex-col items-center border border-t-0 border-[#666] bg-[#ececec]">
            <span className="flex h-[8px] w-full items-center justify-center bg-[#9a9a9e]"><span className="h-[3px] w-[13px] bg-[radial-gradient(#333_1px,transparent_1px)] bg-[length:2px_2px]" /></span>
            {RIGHT.map((n) => (
              <span key={n} className="flex h-[22px] items-center"><Ic n={n} w={22} /></span>
            ))}
          </div>
          <div className="mt-[2px] flex flex-col items-center border border-[#666] bg-[#ececec]">
            <span className="flex h-[7px] w-full items-center justify-center bg-[#9a9a9e]"><span className="h-[3px] w-[13px] bg-[radial-gradient(#333_1px,transparent_1px)] bg-[length:2px_2px]" /></span>
            {["ord1", "ord2", "ord3", "ord4"].map((n) => (
              <span key={n} className="flex h-[22px] items-center"><Ic n={n} w={22} /></span>
            ))}
            <span className="my-[4px] h-[1px] w-[20px] bg-[#999]" />
            {["abc", "hat"].map((n) => (
              <span key={n} className="flex h-[22px] items-center"><Ic n={n} w={22} /></span>
            ))}
          </div>
        </div>
      </div>

      {/* Command line */}
      <div className="mt-[4px] flex h-[35px] shrink-0">
        <div className="flex w-[24px] shrink-0 flex-col items-center bg-[#747478] pt-[3px]">
          <span className="h-[5px] w-[16px] bg-[radial-gradient(#ccc_1px,transparent_1px)] bg-[length:2px_2px]" />
          <svg className="mt-[9px]" width="10" height="10" stroke="#eee" strokeWidth="2.500"><path d="M1 1l8 8M9 1L1 9" /></svg>
        </div>
        <div className="min-w-0 flex-1 border-b border-[#555] bg-[#c4c4c4] pl-[2px] leading-[15.500px] text-[#222]">
          <div className="flex whitespace-nowrap">
            <span><Mixed text="非 Autodesk DWG。 " /></span>
            <span className="ml-[4px]"><Mixed text="此 DWG 文件由非 Autodesk 开发或许可的软件应用程序保存。 " /></span>
            <span className="ml-[3px]"><Mixed text="Autodesk 不能保证应用程序兼容性或此文件的完整性。" /></span>
          </div>
          <div className="whitespace-nowrap"><Mixed text="命令:" /></div>
        </div>
      </div>
      <div className="flex flex-1 overflow-hidden bg-white">
        <div className="w-[24px] shrink-0 bg-[#747478]" />
        <div className="ml-[5px] mt-[4px] h-[10px] w-[16px] border border-[#bbb]" />
        <span className="ml-[18px] mt-[2px] text-[11px] leading-none text-[#888]">键入命令</span>
      </div>

      {/* Watermark */}
      <div className="absolute left-[770px] top-[962px] whitespace-nowrap font-['Liberation_Sans',sans-serif] text-[15.750px] leading-[22px] text-white/45">https://blog.csdn.net/m0_46652448</div>
    </div>
  );
}
